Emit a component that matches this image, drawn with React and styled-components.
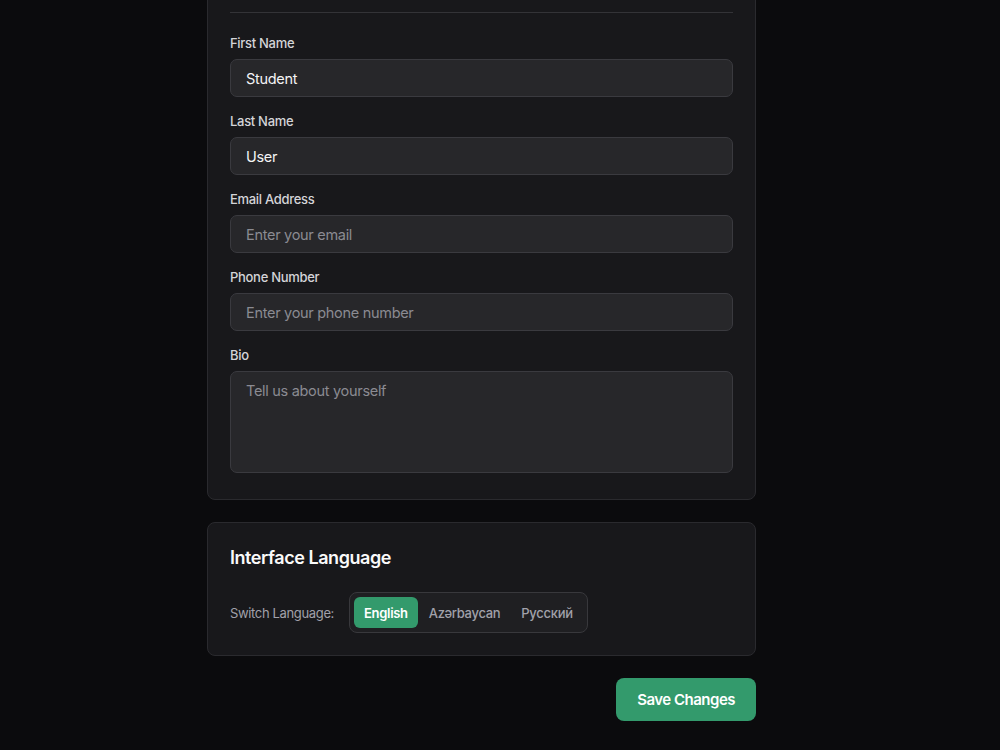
import React, { useState } from 'react';
import styled, { createGlobalStyle } from 'styled-components';

const GlobalStyle = createGlobalStyle`
  html, body {
    margin: 0;
    padding: 0;
    background: #0b0b0d;
  }
  body {
    font-family: Inter, "Noto Sans", "Liberation Sans", sans-serif;
    color: #f4f4f5;
  }
  * {
    box-sizing: border-box;
  }
`;

const Page = styled.main`
  display: flex;
  justify-content: center;
  padding: 0 37px 40px 0;
  margin-top: -24px;
`;

const Column = styled.div`
  width: 549px;
  display: flex;
  flex-direction: column;
  gap: 22px;
`;

const Card = styled.section`
  background: #18181b;
  border: 1px solid #2a2a2e;
  border-radius: 8px;
  padding: ${({ $tight }) => ($tight ? '21px 22px 22px' : '23px 22px 26px')};
`;

const CardTitle = styled.h2`
  margin: 0;
  font-size: 18px;
  line-height: 28px;
  font-weight: 600;
  letter-spacing: -0.45px;
  color: #fafafa;
`;

const Divider = styled.hr`
  border: 0;
  border-top: 1px solid #333337;
  margin: 12px 0 21px;
`;

const Fields = styled.div`
  display: flex;
  flex-direction: column;
  gap: 15px;
`;

const Field = styled.label`
  display: flex;
  flex-direction: column;
  gap: 7px;
`;

const Label = styled.span`
  font-size: 13px;
  line-height: 18px;
  font-weight: 500;
  letter-spacing: -0.3px;
  color: #d4d4d8;
`;

const inputBase = `
  width: 100%;
  background: #27272a;
  border: 1px solid #3a3a3f;
  border-radius: 7px;
  color: #f4f4f5;
  font-family: Inter, "Noto Sans", "Liberation Sans", sans-serif;
  font-size: 14.5px;
  letter-spacing: -0.3px;
  outline: none;
  &::placeholder {
    color: #8b8b92;
  }
`;

const Input = styled.input`
  ${inputBase}
  height: 38px;
  padding: 0 15px;
`;

const TextArea = styled.textarea`
  ${inputBase}
  height: 102px;
  padding: 9px 15px;
  line-height: 20px;
  resize: none;
`;

const LangRow = styled.div`
  display: flex;
  align-items: center;
  gap: 15px;
  margin-top: 20px;
`;

const LangLabel = styled.span`
  font-size: 13px;
  letter-spacing: -0.35px;
  color: #a1a1aa;
`;

const Segment = styled.div`
  display: flex;
  gap: 1px;
  padding: 4px;
  background: #1f1f22;
  border: 1px solid #38383c;
  border-radius: 8px;
`;

const SegButton = styled.button`
  height: 31px;
  padding: 0 10px;
  border: 0;
  border-radius: 6px;
  font-family: inherit;
  font-size: 13px;
  letter-spacing: -0.3px;
  font-weight: ${({ $active }) => ($active ? 600 : 500)};
  background: ${({ $active }) => ($active ? '#339a6c' : 'transparent')};
  color: ${({ $active }) => ($active ? '#ffffff' : '#a1a1aa')};
  cursor: pointer;
`;

const Actions = styled.div`
  display: flex;
  justify-content: flex-end;
`;

const SaveButton = styled.button`
  height: 43px;
  padding: 0 21px;
  border: 0;
  border-radius: 8px;
  background: #339a6c;
  color: #ffffff;
  font-family: inherit;
  font-size: 15px;
  font-weight: 600;
  letter-spacing: -0.5px;
  cursor: pointer;
`;

const languages = ['English', 'Azərbaycan', 'Русский'];

export default function App() {
  const [lang, setLang] = useState('English');

  return (
    <>
      <GlobalStyle />
      <Page>
        <Column>
          <Card>
            <Divider />
            <Fields>
              <Field>
                <Label>First Name</Label>
                <Input defaultValue="Student" />
              </Field>
              <Field>
                <Label>Last Name</Label>
                <Input defaultValue="User" />
              </Field>
              <Field>
                <Label>Email Address</Label>
                <Input placeholder="Enter your email" />
              </Field>
              <Field>
                <Label>Phone Number</Label>
                <Input placeholder="Enter your phone number" />
              </Field>
              <Field>
                <Label>Bio</Label>
                <TextArea placeholder="Tell us about yourself" />
              </Field>
            </Fields>
          </Card>

          <Card $tight>
            <CardTitle>Interface Language</CardTitle>
            <LangRow>
              <LangLabel>Switch Language:</LangLabel>
              <Segment>
                {languages.map((l) => (
                  <SegButton key={l} $active={l === lang} onClick={() => setLang(l)}>
                    {l}
                  </SegButton>
                ))}
              </Segment>
            </LangRow>
          </Card>

          <Actions>
            <SaveButton>Save Changes</SaveButton>
          </Actions>
        </Column>
      </Page>
    </>
  );
}
